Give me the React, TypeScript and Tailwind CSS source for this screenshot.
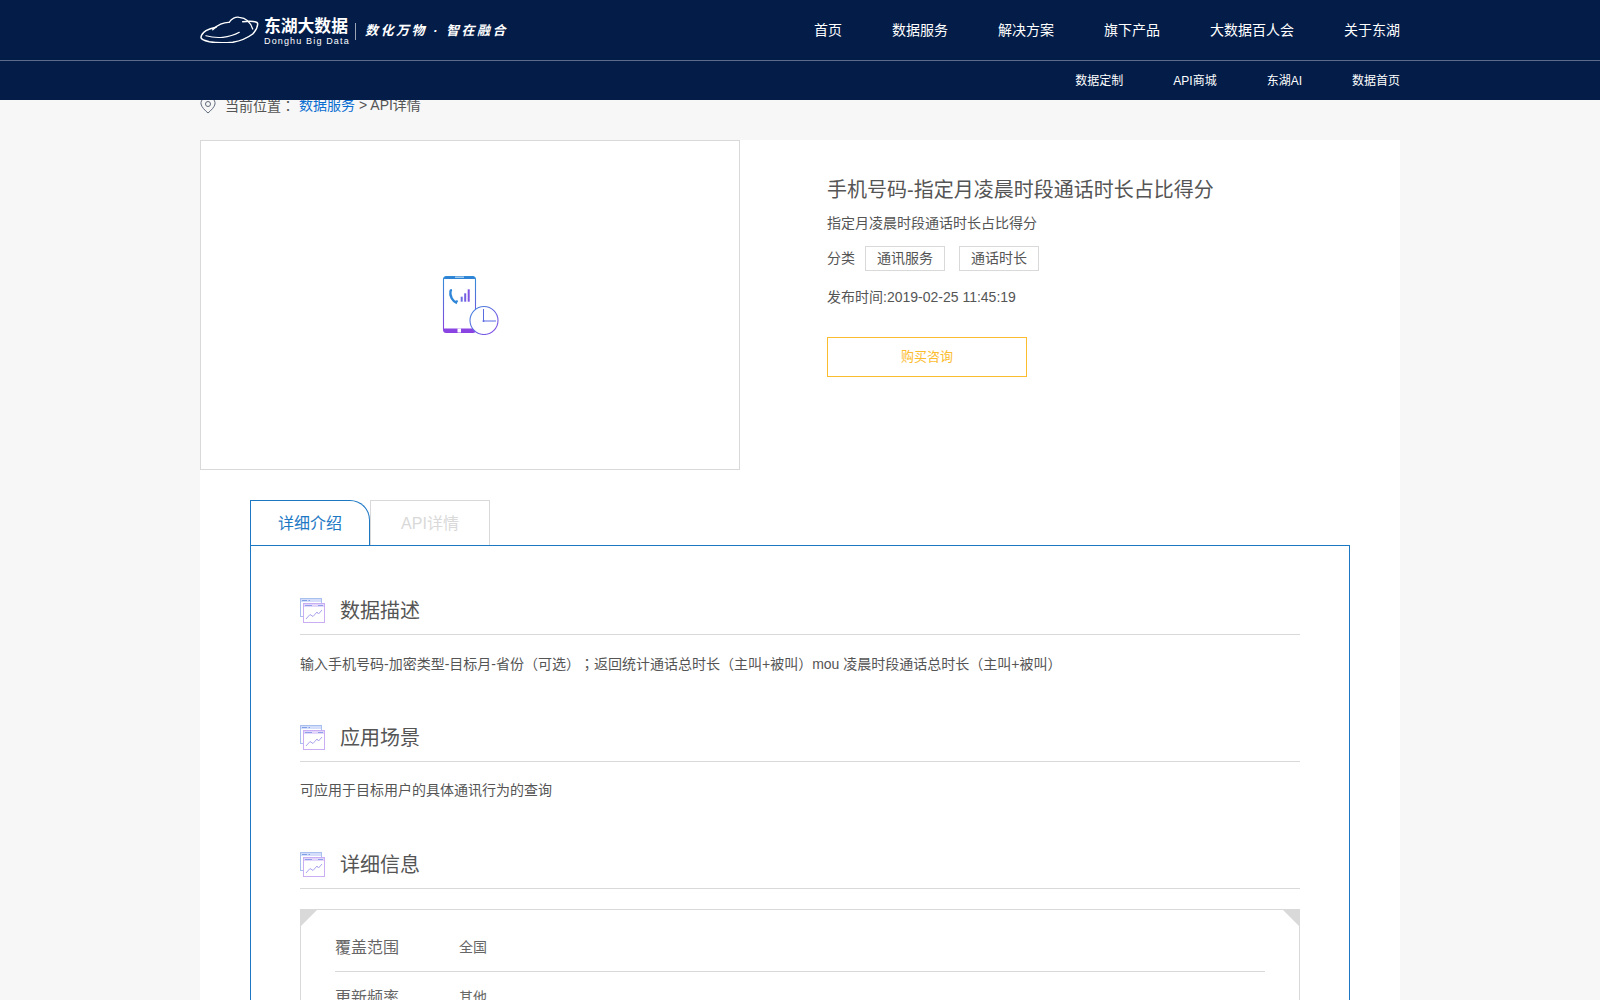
import React from 'react';

const fontStack = { fontFamily: '"Liberation Sans", "Noto Sans CJK SC", sans-serif' };

const mainNav = ['首页', '数据服务', '解决方案', '旗下产品', '大数据百人会', '关于东湖'];
const subNav = ['数据定制', 'API商城', '东湖AI', '数据首页'];

const Logo = () => (
  <div className="flex items-center pt-[2px] text-white">
    <svg className="-mt-[5px]" width="60" height="28" viewBox="0 0 60 28" fill="none" stroke="white" strokeLinecap="round">
      <path d="M12.700 14.700 C17 10 24 7 29.300 7.300 C31 3.500 36 1.500 39.300 2.300 C45 2.800 50 5.500 52.700 14" strokeWidth="1.300" />
      <path d="M42.700 6.700 C50 5.800 58 6 57.700 9 C57.500 13 55 16.500 52.700 19 C46 24 40 26 32.700 27.300 C25 28 16 28 9.300 26.700 C4 25.500 .8 24 1 22.300 C1.200 19.500 3.500 17.500 6 15.700 C9 14 12.500 13 16 12.300" strokeWidth="1.500" />
      <path d="M6 20.700 C12 22.500 17 22.800 22.700 22.300 C29 21.700 34.500 20 39.300 17.300" strokeWidth="1.200" />
    </svg>
    <div className="ml-[4px] w-[84px]">
      <div className="text-[16.800px] font-bold leading-[19px] whitespace-nowrap">东湖大数据</div>
      <div className="text-[9px] leading-[10px] tracking-[1.150px] whitespace-nowrap">Donghu Big Data</div>
    </div>
    <div className="ml-[7px] h-[17px] w-px bg-white/60" />
    <div className="ml-[9px] text-[13px] italic font-bold tracking-[2.500px] whitespace-nowrap">数化万物 · 智在融合</div>
  </div>
);

const Header = () => (
  <header className="relative z-10 h-[100px] bg-[#031c48] text-white">
    <div className="h-[61px] border-b border-[#5c6d8a]">
      <div className="mx-auto flex h-full w-[1200px] items-center justify-between">
        <Logo />
        <nav className="flex gap-[50px] text-[14px]">
          {mainNav.map((item) => (
            <a key={item}>{item}</a>
          ))}
        </nav>
      </div>
    </div>
    <div className="mx-auto flex h-[39px] w-[1200px] items-center justify-end gap-[50px] text-[12px]">
      {subNav.map((item) => (
        <a key={item}>{item}</a>
      ))}
    </div>
  </header>
);

const PinIcon = () => (
  <svg width="16" height="20" viewBox="0 0 16 20" fill="none" stroke="#5f6b7c" strokeWidth="1">
    <path d="M4 3.200 C1.600 4.600 .7 7 1 9 C1.500 12 5 15.500 8 18 C11 15.500 14.500 12 15 9 C15.300 7 14.400 4.600 12 3.200" />
    <circle cx="8" cy="9" r="2.500" />
  </svg>
);

const PhoneArt = () => (
  <svg width="60" height="60" viewBox="0 0 60 60" fill="none">
    <defs>
      <linearGradient id="phoneGrad" x1="0" y1="0" x2="0" y2="1">
        <stop offset="0" stopColor="#2f8fd8" />
        <stop offset="1" stopColor="#8a3fe0" />
      </linearGradient>
      <linearGradient id="barGrad" x1="0" y1="0" x2="1" y2="1">
        <stop offset="0" stopColor="#3f86dc" />
        <stop offset="1" stopColor="#8a4be6" />
      </linearGradient>
    </defs>
    <rect x="3.500" y="1.500" width="32" height="56" rx="3" stroke="url(#phoneGrad)" strokeWidth="1.100" fill="white" />
    <path d="M4 4 V3.500 Q4 1.500 6 1.500 H33 Q35 1.500 35 3.500 V4 Z" fill="#2f83d4" />
    <path d="M4 53.500 V55.500 Q4 57.500 6 57.500 H33 Q35 57.500 35 55.500 V53.500 Z" fill="#8a44e2" />
    <rect x="15" y="1.500" width="9" height="1.500" fill="#9fc9ec" />
    <rect x="17.500" y="53.500" width="3.500" height="4" fill="white" />
    <path d="M10.500 15.500 C9.500 21 12.500 26.500 17 28" stroke="#2f86d8" strokeWidth="2.400" />
    <path d="M10 15.500 L12 15 M16 27.500 L17.500 25.500" stroke="#2f86d8" strokeWidth="2" />
    <rect x="20.700" y="21.700" width="2" height="5" fill="#6a6ee0" />
    <rect x="24.200" y="18.300" width="2" height="8.400" fill="#7560e2" />
    <rect x="27.700" y="14.300" width="2" height="12.400" fill="#8054e4" />
    <circle cx="44" cy="45.500" r="14" fill="white" stroke="url(#barGrad)" strokeWidth="1.100" />
    <path d="M43.500 34 V46 H56" stroke="#5a6ce0" strokeWidth="1" />
    <circle cx="43.500" cy="46" r="1" fill="#5a6ce0" />
  </svg>
);

const SectionIcon = () => (
  <svg width="25" height="25" viewBox="0 0 25 25" fill="none">
    <rect x=".5" y=".5" width="21" height="18" fill="white" stroke="#a9c0ee" />
    <rect x="1" y="1" width="20" height="3" fill="#d4defa" />
    <path d="M2 2.500 H7 M8.500 2.500 H10" stroke="#7f9fe6" />
    <rect x="3.500" y="5.500" width="21" height="19" fill="white" stroke="#c9aef4" />
    <rect x="4" y="6" width="20" height="3" fill="#e2d6fb" />
    <path d="M5 7.500 H12 M18 7.500 H23" stroke="#8fa0ea" />
    <path d="M6 21 L10 16.500 L13 18.500 L17 14 L18.500 16 L22 12" stroke="#a9a4ec" />
  </svg>
);

const SectionHeading = ({ title }: { title: string }) => (
  <div className="flex h-[50px] items-center gap-[15px] border-b border-[#d9d9d9] pt-[2px]">
    <SectionIcon />
    <h3 className="text-[20px] text-[#555]">{title}</h3>
  </div>
);

const Section = ({ title, children }: { title: string; children: React.ReactNode }) => (
  <section className="h-[127px]">
    <SectionHeading title={title} />
    <p className="mt-[18px] text-[14px] leading-[20px] text-[#555] [text-spacing-trim:space-all]">{children}</p>
  </section>
);

const InfoRow = ({ label, value }: { label: string; value: string }) => (
  <div className="flex h-[50px] items-center border-b border-[#d9d9d9] pt-[2px]">
    <div className="w-[124px] text-[16px] text-[#666]">{label}</div>
    <div className="text-[14px] text-[#666]">{value}</div>
  </div>
);

const App = () => (
  <div className="h-[1000px] overflow-hidden bg-[#f7f7f7]" style={fontStack}>
    <Header />
    <main className="mx-auto w-[1200px]">
      <div className="-mt-[5px] flex h-[45px] items-start text-[14px] leading-[20px] text-[#555] [text-spacing-trim:space-all]">
        <PinIcon />
        <span className="ml-[9px]">当前位置<span className="font-['Noto_Sans_CJK_TC']">：</span></span>
        <a className="ml-[4px] text-[#0a6ed1]">数据服务</a>
        <span className="ml-[4px]">&gt; API详情</span>
      </div>
      <div className="bg-white">
        <div className="flex">
          <div className="flex h-[330px] w-[540px] items-center justify-center border border-[#d9d9d9]">
            <PhoneArt />
          </div>
          <div className="ml-[87px] pt-[36px] text-[14px] text-[#555]">
            <h1 className="text-[20px] leading-[28px]">手机号码-指定月凌晨时段通话时长占比得分</h1>
            <p className="mt-[9px] leading-[20px]">指定月凌晨时段通话时长占比得分</p>
            <div className="mt-[13px] flex items-center">
              <span className="w-[38px]">分类</span>
              <span className="flex h-[25px] w-[80px] items-center justify-center border border-[#d9d9d9]">通讯服务</span>
              <span className="ml-[14px] flex h-[25px] w-[80px] items-center justify-center border border-[#d9d9d9]">通话时长</span>
            </div>
            <p className="mt-[16px] leading-[20px]">发布时间:2019-02-25 11:45:19</p>
            <button className="mt-[30px] h-[40px] w-[200px] border border-[#fbbc2e] text-[13px] text-[#fbbc2e]">购买咨询</button>
          </div>
        </div>
        <div className="px-[50px] pt-[30px]">
          <div className="flex h-[45px]">
            <div className="flex h-[45px] w-[120px] items-center justify-center rounded-tr-[20px] border border-b-0 border-[#1d78c4] pt-[2px] text-[16px] text-[#1d78c4]">详细介绍</div>
            <div className="flex h-[45px] w-[120px] items-center justify-center border border-b-0 border-[#d9d9d9] pt-[2px] text-[16px] text-[#d9d9d9]">API详情</div>
          </div>
          <div className="border border-[#1d78c4] px-[49px] pt-[39px] pb-[40px]">
            <Section title="数据描述">
              输入手机号码-加密类型-目标月-省份（可选）<span className="font-['Noto_Sans_CJK_TC']">；</span>返回统计通话总时长（主叫+被叫）mou 凌晨时段通话总时长（主叫+被叫）
            </Section>
            <Section title="应用场景">可应用于目标用户的具体通讯行为的查询</Section>
            <SectionHeading title="详细信息" />
            <div className="relative mt-[20px] border border-[#d9d9d9] px-[34px] pt-[12px]">
              <div className="absolute -left-px -top-px h-[18px] w-[18px] bg-[#d9d9d9] [clip-path:polygon(0_0,100%_0,0_100%)]" />
              <div className="absolute -right-px -top-px h-[18px] w-[18px] bg-[#d9d9d9] [clip-path:polygon(0_0,100%_0,100%_100%)]" />
              <InfoRow label="覆盖范围" value="全国" />
              <InfoRow label="更新频率" value="其他" />
            </div>
          </div>
        </div>
      </div>
    </main>
  </div>
);

export default App;
